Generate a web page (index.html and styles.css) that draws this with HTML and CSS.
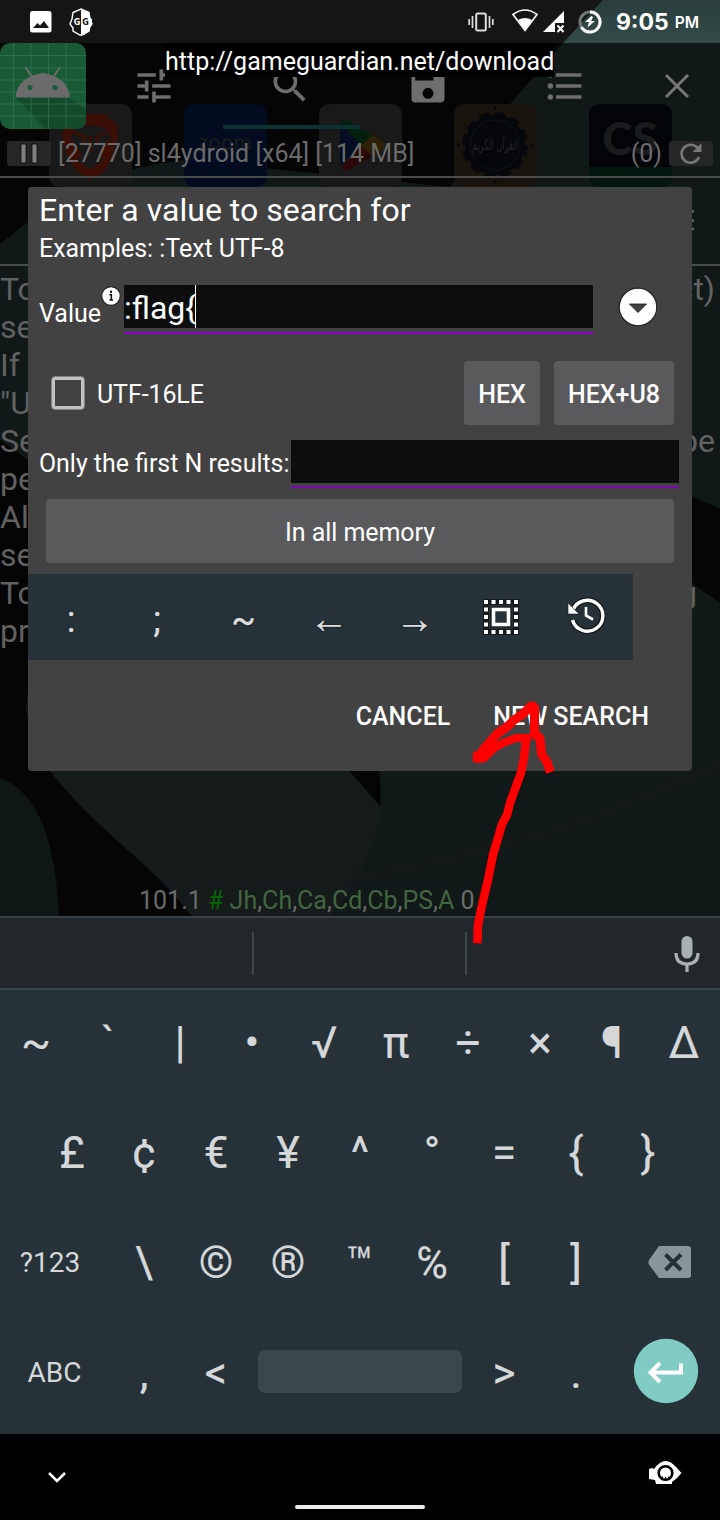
FILE: index.html
```html
<!DOCTYPE html>
<html lang="en">
<head>
<meta charset="utf-8">
<title>GameGuardian</title>
<link rel="stylesheet" href="styles.css">
</head>
<body>
<div class="screen">
  <svg class="wallpaper" viewBox="0 0 720 916" width="720" height="916">
    <defs><linearGradient id="corner" x1="0" y1="0" x2="0" y2="1"><stop offset="0" stop-color="#2a3f3d"/><stop offset="1" stop-color="#334a48"/></linearGradient></defs>
    <rect width="720" height="916" fill="#050505"/>
    <path d="M563 43H720V916H192Q160 882 100 824Q26 750 26 705Q28 670 80 600L28 460L0 440V244L28 222Q90 170 185 160L450 187L510 104Z" fill="#111918"/>
    <path d="M0 440L28 460V680L26 706Q27 740 50 771Q75 804 130 852Q165 882 192 916H0Z" fill="#050505"/>
    <path d="M0 778Q54 798 59 916H0Z" fill="#0f1716"/>
    <path d="M50 771H349Q380 800 381 806Q376 860 330 916H192Q165 882 130 852Q75 804 50 771Z" fill="#151a1a"/>
    <path d="M349 771H379Q382 790 380 806Q365 788 349 771Z" fill="#050505"/>
    <path d="M692 496L720 509V603L692 583Z" fill="#050505"/>
    <path d="M360 870Q550 840 720 755V772Q550 850 350 885Z" fill="#121918"/>
    <rect width="720" height="43" fill="#151515"/>
    <path d="M603 0H720V43H563Z" fill="url(#corner)"/>
    <g>
      <rect x="49" y="104" width="83" height="83" rx="10" fill="#191919"/>
      <path d="M76 114H104L110 119L117 124L118 137L112 158L104 172L90 180L77 172L68 158L62 137L65 124Z" fill="#3b0f06"/>
      <path d="M75 128L90 125L106 128L111 138L103 146L98 155L104 160L90 169L77 160L82 155L76 146L70 138Z" fill="#191919"/>
      <path d="M73 132L85 137L83 144M107 132L96 137L98 144M90 136V151" fill="none" stroke="#3b0f06" stroke-width="3"/>
      <rect x="184" y="104" width="83" height="83" rx="10" fill="#020b20"/>
      <text x="225" y="150" class="zoom-word">zoom</text>
      <rect x="319" y="104" width="83" height="83" rx="10" fill="#191919"/>
      <path d="M340 124L362 145L340 166Z" fill="#050d25"/>
      <path d="M341 122Q345 118 350 122L372 135L361 146Z" fill="#03200d"/>
      <path d="M372 135L384 142Q388 146 384 149L372 156L361 146Z" fill="#2c2105"/>
      <path d="M341 168Q345 172 350 169L372 156L361 146Z" fill="#2c0707"/>
      <rect x="454" y="104" width="83" height="83" rx="10" fill="#18130c"/>
      <circle cx="495" cy="145" r="30" fill="#05070b" stroke="#05070b" stroke-width="6" stroke-dasharray="10 5.700"/>
      <circle cx="495" cy="145" r="25" fill="none" stroke="#0e1216"/>
      <path d="M495 107V183M457 145H533" stroke="#05070b" stroke-width="3" stroke-dasharray="3 70"/>
      <text x="495" y="150" class="quran-word" textLength="46" lengthAdjust="spacingAndGlyphs">القرآن الكريم</text>
      <rect x="589" y="104" width="83" height="83" rx="10" fill="#030407"/>
      <path d="M589 167H672V177A10 10 0 0 1 662 187H599A10 10 0 0 1 589 177Z" fill="#04170f"/>
      <text x="630" y="155" class="cs-word">CS</text>
    </g>
  </svg>

  <header class="status">
    <div class="status-left">
      <svg width="22" height="22" viewBox="0 0 22 22"><rect width="21.500" height="21.500" rx="2.500" fill="#fff"/><path d="M3 17L7.500 12L10 14.500L14 10L19 17Z" fill="#151515"/></svg>
      <svg width="24" height="28" viewBox="0 0 24 28"><path d="M12 1L20 4.500L21 11L23 16L20 20V23L13 27H11L4 23V20L1 16L3 11L4 4.500Z" fill="#151515" stroke="#fff" stroke-width="1.400"/><path d="M12 1L20 4.500V9L23 11V16L21 20V22L15 27H12Z" fill="#fff"/><text x="8" y="16.500" class="g-mark">G</text><text x="16.500" y="16.500" class="g-mark g-dark">G</text></svg>
    </div>
    <div class="status-right">
      <svg width="26" height="20" viewBox="0 0 26 20"><rect x="8.200" y="1.500" width="9.600" height="17" rx="1.500" fill="none" stroke="#ddd" stroke-width="2"/><path d="M4.500 4V16M1.200 7V13M21.500 4V16M24.800 7V13" stroke="#ddd" stroke-width="1.700"/></svg>
      <svg class="wifi" width="26" height="23" viewBox="0 0 26 23"><path d="M1 5.500Q13-3.500 25 5.500L13 21.500Z" fill="none" stroke="#fff" stroke-width="1.600"/><path d="M6 11Q13 7 20 11L13 22Z" fill="#fff"/></svg>
      <svg class="signal" width="23" height="22" viewBox="0 0 23 22"><path d="M0 21L21 0V12H12V21Z" fill="#fff"/><path d="M14.500 14.500L20.500 21M20.500 14.500L14.500 21" stroke="#fff" stroke-width="2"/></svg>
      <svg class="battery" width="24" height="24" viewBox="0 0 24 24"><circle cx="12" cy="12" r="10" fill="none" stroke="#6e7977" stroke-width="3"/><path d="M12 2A10 10 0 1 1 3.500 17.200" fill="none" stroke="#fff" stroke-width="3"/><path d="M13.500 6L7 12H11L9.500 17.500L17 11H13L15 7Z" fill="#fff"/></svg>
      <span class="clock">9:05</span><span class="ampm">PM</span>
    </div>
  </header>

  <main class="app">
    <div class="toolbar">
      <svg class="app-icon" width="86" height="86" viewBox="0 0 86 86">
        <rect width="86" height="86" rx="10" fill="#195b36"/>
        <path d="M16 55H70L86 66V76Q86 86 76 86H46Z" fill="#134a2c"/>
        <path d="M13.500 0V86M31 0V86M48.500 0V86M66 0V86M0 12.500H86M0 25H86M0 37H86M0 49H86M0 61H86M0 73H86" stroke="#397453" stroke-width="1" opacity=".75"/>
        <path d="M15.500 54.500Q17 34 43 30Q68 34 70 54.500Z" fill="#6b6b6b"/>
        <path d="M25.500 24L32 34M60 24L53.500 34" stroke="#6b6b6b" stroke-width="2"/>
        <circle cx="30" cy="44.500" r="2.600" fill="#195b36"/><circle cx="55" cy="44.500" r="2.600" fill="#195b36"/>
      </svg>
      <div class="tool"><svg width="44" height="44" viewBox="0 0 24 24" fill="#6e6e6e"><path d="M3 17v2h6v-2H3zM3 5v2h10V5H3zm10 16v-2h8v-2h-8v-2h-2v6h2zM7 9v2H3v2h4v2h2V9H7zm14 4v-2H11v2h10zm-6-4h2V7h4V5h-4V3h-2v6z"/></svg></div>
      <div class="tool tool-active"><svg width="44" height="44" viewBox="0 0 24 24" fill="#6e6e6e"><path d="M15.500 14h-.79l-.28-.27A6.471 6.471 0 0 0 16 9.500 6.500 6.500 0 1 0 9.500 16c1.610 0 3.090-.59 4.230-1.570l.27.28v.79l5 4.990L20.490 19l-4.990-5zm-6 0C7.010 14 5 11.990 5 9.500S7.010 5 9.500 5 14 7.010 14 9.500 11.990 14 9.500 14z"/></svg></div>
      <div class="tool"><svg width="44" height="44" viewBox="0 0 24 24" fill="#6e6e6e"><path d="M17 3H5a2 2 0 0 0-2 2v14a2 2 0 0 0 2 2h14c1.100 0 2-.9 2-2V7l-4-4zm-5 16a3 3 0 1 1 0-6 3 3 0 0 1 0 6zm3-10H5V5h10v4z"/></svg></div>
      <div class="tool"><svg width="44" height="44" viewBox="0 0 24 24" fill="#6e6e6e"><path d="M4 10.500a1.500 1.500 0 1 0 0 3 1.500 1.500 0 0 0 0-3zm0-6a1.500 1.500 0 1 0 0 3 1.500 1.500 0 0 0 0-3zm0 12a1.500 1.500 0 1 0 0 3 1.500 1.500 0 0 0 0-3zM7 19h14v-2H7v2zm0-6h14v-2H7v2zm0-8v2h14V5H7z"/></svg></div>
      <div class="tool tool-close"><svg width="26" height="26" viewBox="0 0 26 26"><path d="M2 2L24 24M24 2L2 24" stroke="#777" stroke-width="3"/></svg></div>
    </div>
    <div class="process">
      <span class="mini"><svg width="18" height="21" viewBox="0 0 18 21"><path d="M1 1H6V20H1ZM12 1H17V20H12Z" fill="#808080" stroke="#080808" stroke-width=".8"/></svg></span>
      <span class="process-name">[27770] sl4ydroid [x64] [114 MB]</span>
      <span class="count">(0)</span>
      <span class="mini"><svg width="24" height="24" viewBox="0 0 24 24"><path d="M20 15A9 9 0 1 1 18.500 6" fill="none" stroke="#777" stroke-width="2.600"/><path d="M22.500 1V10H13.500Z" fill="#777"/></svg></span>
    </div>
    <div class="subbar"><svg width="3" height="22" viewBox="0 0 3 22"><path d="M0 1.500H3M0 10.500H3M0 19H3" stroke="#5f6262" stroke-width="2.500"/></svg></div>
    <div class="help">
      <div class="line"><span>To</span><span>ct)</span></div>
      <div class="line"><span>se</span></div>
      <div class="line"><span>If</span></div>
      <div class="line"><span>"U</span></div>
      <div class="line"><span>Se</span><span>be</span></div>
      <div class="line"><span>pe</span></div>
      <div class="line"><span>Al</span></div>
      <div class="line"><span>se</span></div>
      <div class="line line-short"><span>To</span><span>g</span></div>
      <div class="line"><span>pr</span></div>
    </div>
    <div class="version">101.1 <b class="hash">#</b> <i>Jh</i>,<i>Ch</i>,<i>Ca</i>,<i>Cd</i>,<i>Cb</i>,<i>PS</i>,<i>A</i> 0</div>
  </main>

  <div class="toast">http://gameguardian.net/download</div>

  <section class="dialog">
    <h1 class="title">Enter a value to search for</h1>
    <p class="examples">Examples: :Text UTF-8</p>
    <div class="value-row">
      <label class="value-label">Value</label>
      <svg class="info" width="20" height="20" viewBox="0 0 20 20"><circle cx="10" cy="10" r="9.300" fill="#fff" stroke="#222" stroke-width="1.200"/><path d="M8.500 8.800H10.300V14M8.500 14H12" fill="none" stroke="#111" stroke-width="1.600"/><circle cx="10" cy="5.700" r="1.200" fill="#111"/></svg>
      <div class="field field-active"><div class="field-box"><span>:flag{</span><span class="caret"></span></div></div>
      <svg class="drop" width="40" height="40" viewBox="0 0 40 40"><circle cx="20" cy="20" r="18.800" fill="#fff" stroke="#222" stroke-width="1.200"/><path d="M11.500 17H28.500L20 25.500Z" fill="#424242" stroke="#111" stroke-width=".8"/></svg>
    </div>
    <div class="encoding-row">
      <span class="checkbox"></span><span class="check-label">UTF-16LE</span>
      <span class="button hex">HEX</span><span class="button hexu">HEX+U8</span>
    </div>
    <div class="limit-row"><span class="limit-label">Only the first N results:</span><div class="field"><div class="field-box"></div></div></div>
    <div class="button memory">In all memory</div>
    <div class="strip">
      <span>:</span><span>;</span><span class="wave">~</span><span class="arrow">←</span><span class="arrow">→</span>
      <span><svg width="36" height="36" viewBox="0 0 36 36"><path d="M3 3H33V33H3Z" fill="none" stroke="#14191c" stroke-width="6"/><path d="M3 3H33V33H3Z" fill="none" stroke="#fff" stroke-width="4" stroke-dasharray="4 3.500" stroke-dashoffset="2"/><rect x="10.500" y="10.500" width="15" height="15" fill="#14191c" stroke="#14191c" stroke-width="6"/><rect x="10.500" y="10.500" width="15" height="15" fill="#263238" stroke="#fff" stroke-width="3.600"/></svg></span>
      <span><svg width="40" height="38" viewBox="0 0 40 38"><g fill="none" stroke="#14191c" stroke-width="6"><path d="M7 14A15.500 15.500 0 1 1 6.500 24"/></g><path d="M7 14A15.500 15.500 0 1 1 6.500 24" fill="none" stroke="#fff" stroke-width="3.400"/><path d="M2 7V18H13Z" fill="#fff" stroke="#14191c" stroke-width=".6"/><path d="M20 11V19.500L27 23.500" fill="none" stroke="#fff" stroke-width="2.600"/></svg></span>
    </div>
    <div class="actions"><span>CANCEL</span><span>NEW SEARCH</span></div>
  </section>

  <div class="suggestions">
    <span class="slot"></span><span class="slot slot-mid"></span>
    <svg class="mic" width="26" height="36" viewBox="0 0 26 36"><rect x="7.500" y="0" width="11" height="22.500" rx="5.500" fill="#a9b0b4"/><path d="M2 17Q2 28 13 28Q24 28 24 17M13 28V36" fill="none" stroke="#a9b0b4" stroke-width="3.200"/></svg>
  </div>
  <div class="keyboard">
    <div class="keys"><span>~</span><span>`</span><span>|</span><span>•</span><span>√</span><span>π</span><span>÷</span><span>×</span><span>¶</span><span>Δ</span></div>
    <div class="keys"><span>£</span><span>¢</span><span>€</span><span>¥</span><span>^</span><span>°</span><span>=</span><span>{</span><span>}</span></div>
    <div class="keys"><span class="wide digits">?123</span><span>\</span><span>©</span><span>®</span><span>™</span><span>℅</span><span>[</span><span>]</span><span class="wide erase"><svg width="44" height="34" viewBox="0 0 44 34"><path d="M11 1H40Q43 1 43 4V30Q43 33 40 33H11L1 19.500Q0 17 1 15Z" fill="#8a959a"/><path d="M17.500 9.500L33 25M33 9.500L17.500 25" stroke="#263238" stroke-width="4"/></svg></span></div>
    <div class="keys"><span class="wide letters">ABC</span><span>,</span><span>&lt;</span><span class="space"></span><span>&gt;</span><span>.</span><span class="wide enter"><svg width="66" height="66" viewBox="0 0 66 66"><circle cx="33" cy="33" r="32.200" fill="#80cbc4"/><path d="M48 25.500V34.500H18M27 25L17.500 34.500L27 44" fill="none" stroke="#fff" stroke-width="4"/></svg></span></div>
  </div>
  <footer class="nav">
    <svg class="hide" width="20" height="14" viewBox="0 0 20 14"><path d="M2 2L10 10L18 2" fill="none" stroke="#fff" stroke-width="2.600"/></svg>
    <span class="home"></span>
    <svg class="eye" width="36" height="26" viewBox="0 0 36 26"><path d="M2 9L5 8L7 9Q18-6 29 7L34.500 13Q30 19 25 22V24H9L8 20L2 19Z" fill="#fff"/><circle cx="18.500" cy="13" r="6.800" fill="#fff" stroke="#000" stroke-width="2.600"/><path d="M15.500 16.500L14.500 20M21.500 16.500L22.500 20M18.500 17V20" stroke="#000" stroke-width="1.300"/></svg>
  </footer>

  <svg class="scribble" width="100" height="260" viewBox="460 690 100 260"><g fill="none" stroke="#f00" stroke-linejoin="bevel" stroke-linecap="square"><path d="M477.500 939L478 925L482 905L488 880L493 855L498 838L502 824L507 815L510 803L514 792L518 781L521 773L524 758L525.500 745V739" stroke-width="8.500"/><path d="M527 738H516L503 743L490 750L481 757" stroke-width="8"/><path d="M478.500 757L483 750L490 742L498 733L507 727L514 720L523 714L531 706H534.500V734L540 738L541.500 754L547 762L549 768" stroke-width="9"/><path d="M478.500 757L483 757L492 748" stroke-width="11"/></g></svg>
</div>
</body>
</html>
```

FILE: styles.css
```css
* { box-sizing: border-box; }
body { margin: 0; background: #000; font-family: Roboto, "Noto Sans", "DejaVu Sans", sans-serif; }
svg { display: block; flex: none; }
.screen { position: relative; width: 720px; height: 1520px; overflow: hidden; display: flex; flex-direction: column; }
.wallpaper { position: absolute; left: 0; top: 0; }
.zoom-word { font: 700 22px Lato, sans-serif; fill: #17181b; text-anchor: middle; }
.quran-word { font: 15px "DejaVu Sans", sans-serif; fill: #242424; text-anchor: middle; }
.cs-word { font: 900 46px Lato, sans-serif; fill: #191b1d; text-anchor: middle; }

.status { position: relative; flex: none; height: 43px; display: flex; justify-content: space-between; color: #fff; }
.status-left { display: flex; align-items: center; gap: 17px; padding-left: 30px; }
.g-mark { font: 700 8px "DejaVu Sans", sans-serif; fill: #fff; text-anchor: middle; }
.g-dark { fill: #111; }
.status-right { display: flex; align-items: center; padding-right: 21px; }
.wifi { margin: 0 5px 3px 18px; }
.battery { margin-left: 12px; }
.clock { margin-left: 14px; font: 700 23px/42px Inter, sans-serif; }
.ampm { margin: 3px 0 0 6px; font: 600 15.500px/42px Inter, sans-serif; }

.app { position: relative; flex: none; height: 873px; color: #6b6b6b; display: flex; flex-direction: column; }
.toolbar { display: flex; height: 86px; }
.tool { width: 137px; display: flex; align-items: center; justify-content: center; padding-right: 2px; }
.tool-active { border-bottom: 4px solid #0b3232; padding: 3px 4px 0 0; }
.tool-close { width: 86px; padding: 0; }
.process { height: 49px; border-bottom: 2px solid #4a4c4c; display: flex; align-items: center; padding: 2px 7px 0; font-size: 25px; }
.mini { width: 44px; height: 25px; border-radius: 3px; background: #252727; display: flex; align-items: center; justify-content: center; }
.process-name { flex: 1; padding-left: 7px; }
.count { padding-right: 7px; }
.subbar { height: 88px; border-bottom: 2px solid #4a4c4c; display: flex; justify-content: flex-end; padding: 32px 26px 0 0; }
.help { padding: 4px 5px 0 0; font-size: 32px; line-height: 38px; color: #616161; }
.line { display: flex; justify-content: space-between; height: 38px; }
.line-short { padding-right: 18px; }
.version { margin-top: auto; padding: 0 0 0 139px; font-size: 25px; line-height: 30px; white-space: pre; }
.version i { font-style: normal; color: #426542; }
.hash { font-weight: 400; color: #056605; }

.toast { position: absolute; left: 165px; top: 43px; width: 389px; height: 34px; background: #000; color: #fff; font-size: 25px; line-height: 38px; white-space: nowrap; }

.dialog { position: absolute; left: 28px; top: 187px; width: 664px; height: 584px; background: #424242; border-radius: 4px; color: #fff; font-size: 25px; display: flex; flex-direction: column; }
.title { margin: 4px 0 0 11px; font-size: 32px; line-height: 38px; font-weight: 400; letter-spacing: .03px; }
.examples { margin: 5px 0 0 11px; line-height: 30px; letter-spacing: -.04px; }
.value-row { display: flex; margin-top: 21px; height: 50px; padding-left: 11px; }
.value-label { width: 63px; line-height: 58px; }
.info { margin: 1px 3px 0 -1px; }
.field { width: 388px; height: 48px; border-bottom: 2px solid #7b0ab0; }
.field-active { width: 469px; height: 49px; border-color: #8a00c8; }
.field-box { height: 43px; background: #0d0d0d; display: flex; font-size: 32px; line-height: 46px; }
.field-box span:first-child { width: 71px; }
.caret { width: 1px; background: #fff; }
.drop { margin: 2px 0 0 25px; }
.encoding-row { display: flex; align-items: center; margin-top: 26px; height: 64px; padding: 0 18px 0 24px; }
.checkbox { width: 32px; height: 32px; border: 3px solid #c2c2c2; border-radius: 3px; box-shadow: 0 0 0 .5px #c2c2c2; }
.check-label { flex: 1; padding: 3px 0 0 13px; letter-spacing: -.1px; }
.button { height: 64px; border-radius: 4px; background: #5a5a5c; display: flex; align-items: center; justify-content: center; font-weight: 500; padding-top: 3px; }
.hex { width: 76px; margin-right: 14px; }
.hexu { width: 120px; }
.limit-row { display: flex; margin-top: 15px; padding-left: 11px; height: 48px; line-height: 47px; }
.limit-label { width: 252px; white-space: nowrap; font-size: 24.900px; }
.memory { margin: 11px 18px 0; font-weight: 400; letter-spacing: -.05px; }
.strip { margin-top: 11px; width: 605px; height: 86px; background: #263238; display: flex; color: #ddd; font-size: 36px; text-shadow: 0 0 2px #111; -webkit-text-stroke: .3px #ddd; }
.strip > span { width: 86px; padding-top: 5px; display: flex; justify-content: center; align-items: center; }
.strip > .wave { padding-left: 1px; }
.strip > span:nth-child(n+6) { padding: 0 1px 0 0; }
.strip > span:last-child { padding: 0 3px 4px 0; }
.strip .arrow { font-family: "Noto Sans Math", "DejaVu Sans", sans-serif; font-size: 26px; padding-top: 14px; -webkit-text-stroke: 0; }
.actions { display: flex; justify-content: flex-end; gap: 43px; margin-top: 42px; padding-right: 43px; font-weight: 500; line-height: 30px; }

.suggestions { position: relative; flex: none; height: 72px; background: #22272b; border-top: 2px solid #394146; display: flex; align-items: center; }
.slot { width: 254px; height: 43px; border-right: 2px solid #40474b; }
.slot-mid { width: 213px; }
.mic { margin: 2px 0 0 207px; }
.keyboard { position: relative; flex: none; height: 446px; background: #263238; box-shadow: inset 0 2px #3a454b; color: #d5d7d9; font-size: 44px; line-height: 110px; }
.keys { height: 110px; display: flex; justify-content: center; -webkit-text-stroke: .2px #d5d7d9; }
.keys > span { width: 72px; display: flex; justify-content: center; align-items: center; }
.keys > .wide { width: 108px; font-size: 28px; -webkit-text-stroke: 0; }
.keys > .digits { padding-right: 8px; }
.keys > .letters { padding-left: 1px; }
.keys > .erase { padding: 0 0 3px 8px; }
.keys > .enter { padding-bottom: 4px; }
.keys > .space { width: 204px; height: 43px; margin: 32px 6px 0; border-radius: 7px; background: #3c474c; }
.nav { flex: none; height: 86px; background: #000; display: flex; justify-content: space-between; padding: 0 37px 0 47px; position: relative; }
.hide { margin-top: 37px; }
.home { width: 130px; height: 4px; border-radius: 2px; background: #eee; margin: 71px 0 0 6px; }
.eye { margin-top: 26px; }
.scribble { position: absolute; left: 460px; top: 690px; }
```
